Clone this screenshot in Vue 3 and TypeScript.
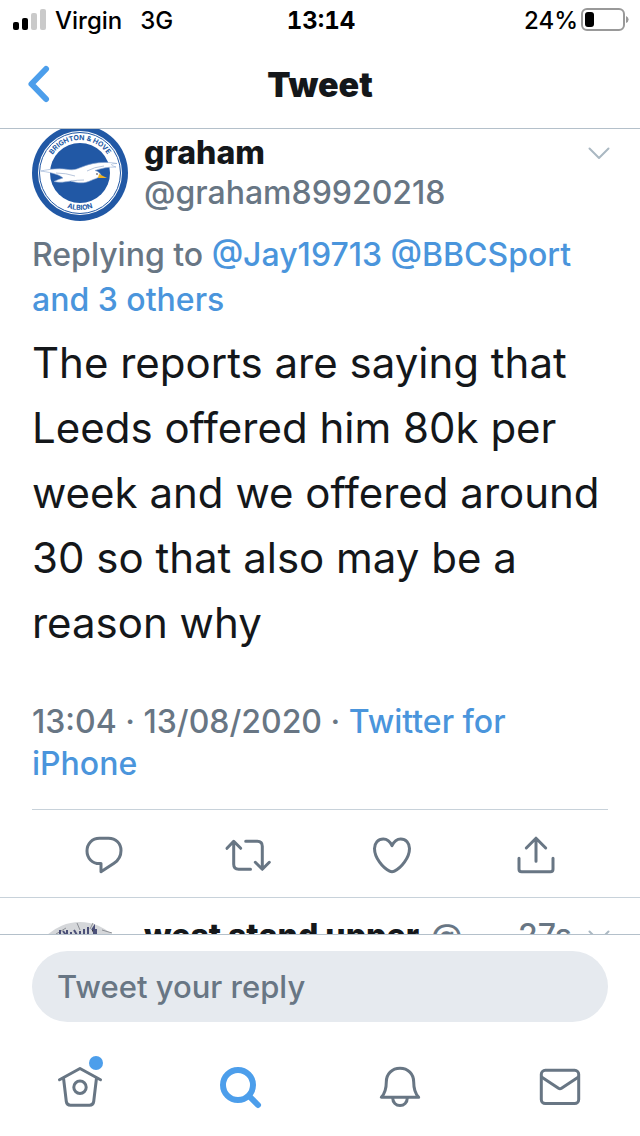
<script setup lang="ts">
import { ref } from 'vue'

interface Action {
  name: string
  paths: string[]
}

const reply = ref('')

const actions: Action[] = [
  {
    name: 'Reply',
    paths: [
      'M19.5 7.3H28.5C36 7.3 41 12.5 41 19.5C41 25 38.5 29.3 34 32.3L21 40.7V32.6H19.5C12 32.6 7 27 7 20C7 12.8 12 7.3 19.5 7.3Z',
    ],
  },
  {
    name: 'Retweet',
    paths: [
      'M3 17.3L9.7 10.3L16.7 17.3M9.7 10.5V33.3Q9.7 38.3 14.7 38.3H26.5',
      'M45.3 31.3L38.3 38.3L31.3 31.3M38.3 38V15.3Q38.3 10.3 33.3 10.3H21.7',
    ],
  },
  {
    name: 'Like',
    paths: [
      'M24 14.7C22 10.3 19 7.9 15.3 7.9C10 7.9 6.5 12 6.5 17.5C6.5 27 15 37 21.6 40.2Q24 41.4 26.4 40.2C33 37 41.5 27 41.5 17.5C41.5 12 38 7.9 32.7 7.9C29 7.9 26 10.3 24 14.7Z',
    ],
  },
  {
    name: 'Share',
    paths: ['M14.3 17L24 7.2L33.7 17M24 7.5V30.3', 'M7 27.3V38.2Q7 40.8 9.6 40.8H38.4Q41 40.8 41 38.2V27.3'],
  },
]
</script>

<template>
  <div class="screen">
    <header class="top">
      <div class="status">
        <div class="carrier">
          <svg class="signal" viewBox="0 0 34 22" aria-hidden="true">
            <rect x="0" y="13" width="6" height="8" rx="2" fill="#000" />
            <rect x="9" y="9" width="6" height="12" rx="2" fill="#000" />
            <rect x="18" y="4" width="6" height="17" rx="2" fill="#cacaca" />
            <rect x="27" y="0" width="6" height="21" rx="2" fill="#cacaca" />
          </svg>
          <span>Virgin</span>
          <span class="network">3G</span>
        </div>
        <time class="clock">13:14</time>
        <div class="battery">
          <span>24%</span>
          <svg class="cell" viewBox="0 0 48 24" aria-hidden="true">
            <rect x="1" y="1" width="42" height="21" rx="5" fill="none" stroke="#999" stroke-width="2" />
            <rect x="4" y="4" width="9" height="15" rx="3" fill="#000" />
            <path d="M45 8Q47.600 9 47.600 11.500T45 15Z" fill="#999" />
          </svg>
        </div>
      </div>
      <div class="nav">
        <button class="back" type="button" aria-label="Back">
          <svg viewBox="0 0 24 40" aria-hidden="true">
            <path d="M18 5L3.500 20L18 35" />
          </svg>
        </button>
        <h1>Tweet</h1>
      </div>
    </header>

    <main class="feed">
      <article class="tweet">
        <div class="author">
          <svg class="avatar" viewBox="0 0 96 96" role="img" aria-label="Brighton &amp; Hove Albion">
            <defs>
              <path id="arc-top" d="M15 48A33 33 0 0 1 81 48" />
              <path id="arc-bottom" d="M11 48A37 37 0 0 0 85 48" />
            </defs>
            <circle cx="48" cy="48" r="48" fill="#2158a5" />
            <circle cx="48" cy="48" r="42" fill="#fff" />
            <circle cx="48" cy="48" r="40.500" fill="none" stroke="#2158a5" stroke-width="1" />
            <circle cx="48" cy="48" r="30" fill="#2158a5" />
            <text class="crest"><textPath href="#arc-top" startOffset="50%">BRIGHTON &amp; HOVE</textPath></text>
            <text class="crest"><textPath href="#arc-bottom" startOffset="50%">ALBION</textPath></text>
            <path
              d="M9 46C18 44 28 43 36 44.500C42 45.500 45 44 50 42C59 38 72 36 85 38.500C80 38.500 76 39.500 84 42C76 42 70 43 63 45.500C67 46.500 69 49 69 51C65 53.500 62 54 59 55.500C52 59 45 58 39 56C33 57 27 58 22 56.500C25 55 28 54 31 53C28 50 22 48 9 46Z"
              fill="#fff"
              stroke="#8faad2"
              stroke-width="0.600"
            />
            <path d="M24 48Q34 48 43 51M39 56Q46 55 52 55M55 46Q62 42 72 41" fill="none" stroke="#b8c6dc" stroke-width="1" />
            <path d="M67 49L75 53L66 53Z" fill="#f0b323" />
            <circle cx="65" cy="49" r="0.800" fill="#223" />
          </svg>
          <div class="names">
            <strong>graham</strong>
            <span>@graham89920218</span>
          </div>
          <button class="more" type="button" aria-label="More options">
            <svg viewBox="0 0 24 16" aria-hidden="true"><path d="M2.500 3.500L12 13L21.500 3.500" /></svg>
          </button>
        </div>
        <p class="replying">
          Replying to <a href="#">@Jay19713</a> <a href="#">@BBCSport</a> <a href="#">and 3 others</a>
        </p>
        <p class="body">
          The reports are saying that Leeds offered him 80k per week and we offered around 30 so that also may be a
          reason why
        </p>
        <p class="meta">13:04 · 13/08/2020 · <a href="#">Twitter for iPhone</a></p>
        <div class="actions">
          <button v-for="a in actions" :key="a.name" type="button" :aria-label="a.name">
            <svg viewBox="0 0 48 48" aria-hidden="true">
              <path v-for="d in a.paths" :key="d" :d="d" />
            </svg>
          </button>
        </div>
      </article>

      <article class="next">
        <svg class="avatar" viewBox="0 0 96 96" aria-hidden="true">
          <circle cx="48" cy="48" r="48" fill="#d5d7da" />
          <path d="M24 12L34 6M45 1L48 8M61 1L58 7M70 8L80 11M19 18L28 14" stroke="#8b8e94" stroke-width="1" />
          <path
            d="M28 8V13M31 9L34 13M35 8V13M39 10V13M42 8L45 13M48 9V13M52 7V13M56 5V13M60 8L62 5V13M64 7V13"
            stroke="#4b5078"
            stroke-width="2"
          />
        </svg>
        <strong>west stand upper</strong>
        <span class="at">@</span>
        <span class="age">27s</span>
        <button class="more" type="button" aria-label="More options">
          <svg viewBox="0 0 24 16" aria-hidden="true"><path d="M2.500 3.500L12 13L21.500 3.500" /></svg>
        </button>
      </article>
    </main>

    <footer class="bottom">
      <form class="composer" @submit.prevent>
        <input v-model="reply" type="text" placeholder="Tweet your reply" aria-label="Tweet your reply" />
      </form>
      <nav class="tabs">
        <a href="#" aria-label="Home">
          <svg viewBox="0 0 56 56" aria-hidden="true">
            <path d="M7.500 20.700L28 9.500L48.500 20.700M11.500 19L14.300 42.500Q14.800 46.300 18.500 46.300H37.500Q41.200 46.300 41.700 42.500L44.500 19" />
            <circle cx="28" cy="28.300" r="6.200" />
            <circle class="dot" cx="44" cy="4" r="7" />
          </svg>
        </a>
        <a href="#" class="active" aria-label="Search">
          <svg viewBox="0 0 56 56" aria-hidden="true">
            <circle cx="26" cy="26" r="15" />
            <path d="M37 37L46 46" />
          </svg>
        </a>
        <a href="#" aria-label="Notifications">
          <svg viewBox="0 0 56 56" aria-hidden="true">
            <path d="M28 9.300C20 9.300 14.300 15 14.300 23C14.300 30 13.500 34 9.300 38.300H46.700C42.500 34 41.700 30 41.700 23C41.700 15 36 9.300 28 9.300Z" />
            <path d="M20.700 39C20.700 43.500 24 46.600 28 46.600S35.300 43.500 35.300 39" />
          </svg>
        </a>
        <a href="#" aria-label="Messages">
          <svg viewBox="0 0 56 56" aria-hidden="true">
            <rect x="9.300" y="11.300" width="37.400" height="33.200" rx="4" />
            <path d="M9.500 18L26.500 29.300Q28 30.300 29.500 29.300L46.500 18" />
          </svg>
        </a>
      </nav>
    </footer>
  </div>
</template>

<style>
body {
  margin: 0;
  background: #fff;
}
</style>

<style scoped>
.screen {
  display: flex;
  flex-direction: column;
  height: 100vh;
  background: #fff;
  color: #14171a;
  font-family: Inter, 'Liberation Sans', sans-serif;
  font-size: 32px;
  font-weight: 500;
}

p,
h1 {
  margin: 0;
}

a {
  color: #4a95dc;
  text-decoration: none;
}

button {
  display: flex;
  align-items: center;
  justify-content: center;
  padding: 0;
  border: 0;
  background: none;
  cursor: pointer;
}

svg {
  display: block;
  flex: none;
  overflow: visible;
}

.top {
  flex: none;
  border-bottom: 1px solid #b4c0ca;
}

.status {
  display: grid;
  grid-template-columns: 1fr auto 1fr;
  align-items: center;
  height: 40px;
  padding: 0 11px 0 13px;
  color: #000;
  font-size: 24px;
}

.carrier,
.battery {
  display: flex;
  align-items: center;
}

.battery {
  justify-content: flex-end;
  gap: 3px;
}

.signal {
  width: 34px;
  height: 22px;
  margin-right: 8px;
}

.network {
  margin-left: 18px;
}

.clock {
  font-weight: 700;
  font-variant-numeric: tabular-nums;
}

.cell {
  width: 48px;
  height: 24px;
}

.nav {
  display: grid;
  grid-template-columns: 80px 1fr 80px;
  align-items: center;
  height: 88px;
}

.back {
  justify-content: flex-start;
  height: 88px;
  padding-left: 28px;
}

.back svg {
  width: 24px;
  height: 40px;
}

.back path {
  fill: none;
  stroke: #4c9eeb;
  stroke-width: 6;
  stroke-linecap: round;
  stroke-linejoin: round;
}

h1 {
  font-size: 34px;
  font-weight: 900;
  text-align: center;
}

.feed {
  flex: 1;
  min-height: 0;
  overflow: hidden;
}

.tweet {
  margin-top: -4px;
  padding: 0 32px;
  border-bottom: 1px solid #c8d2da;
}

.author {
  display: flex;
  gap: 16px;
}

.avatar {
  width: 96px;
  height: 96px;
}

.crest {
  fill: #2158a5;
  font-size: 7px;
  font-weight: 700;
  text-anchor: middle;
}

.names {
  display: flex;
  flex: 1;
  flex-direction: column;
  padding-top: 8px;
  line-height: 40px;
}

strong {
  font-weight: 800;
}

.names span,
.replying,
.meta,
.at,
.age {
  color: #687684;
}

.more {
  align-self: flex-start;
  width: 24px;
  height: 16px;
}

.author .more {
  margin-top: 20px;
  margin-right: -3px;
}

.more svg {
  width: 24px;
  height: 16px;
}

.more path {
  fill: none;
  stroke: #aab8c2;
  stroke-width: 2;
  stroke-linecap: round;
  stroke-linejoin: round;
}

.replying {
  margin-top: 11px;
  line-height: 45px;
}

.body {
  margin-top: 8px;
  font-size: 42px;
  font-weight: 400;
  line-height: 65px;
}

.meta {
  margin-top: 46px;
  line-height: 42px;
}

.actions {
  display: grid;
  grid-template-columns: repeat(4, 1fr);
  box-sizing: border-box;
  height: 88px;
  margin-top: 24px;
  padding-top: 3px;
  border-top: 1px solid #c8d2da;
}

.actions svg {
  width: 48px;
  height: 48px;
}

.actions path {
  fill: none;
  stroke: #687684;
  stroke-width: 3;
  stroke-linecap: round;
  stroke-linejoin: round;
}

.next {
  display: flex;
  padding: 18px 29px 0 32px;
  line-height: 40px;
}

.next .avatar {
  margin: 6px 16px 0 0;
}

.at {
  margin-left: 12px;
}

.age {
  margin-left: auto;
}

.next .more {
  margin: 12px 0 0 15px;
}

.bottom {
  flex: none;
  border-top: 1px solid #b4c0ca;
  background: #fff;
}

.composer {
  padding: 16px 32px;
}

.composer input {
  display: block;
  box-sizing: border-box;
  width: 100%;
  height: 71px;
  padding: 0 25px;
  border: 0;
  border-radius: 36px;
  outline: none;
  background: #e6eaef;
  color: #14171a;
  font: inherit;
  font-size: 31px;
}

.composer input::placeholder {
  color: #687684;
  opacity: 1;
}

.tabs {
  display: grid;
  grid-template-columns: repeat(4, 1fr);
  height: 98px;
}

.tabs a {
  display: flex;
  align-items: center;
  justify-content: center;
}

.tabs svg {
  width: 56px;
  height: 56px;
  fill: none;
  stroke: #687684;
  stroke-width: 3;
  stroke-linecap: round;
  stroke-linejoin: round;
}

.tabs .active svg {
  stroke: #4c9eeb;
  stroke-width: 6;
}

.tabs .dot {
  fill: #4c9eeb;
  stroke: none;
}
</style>
